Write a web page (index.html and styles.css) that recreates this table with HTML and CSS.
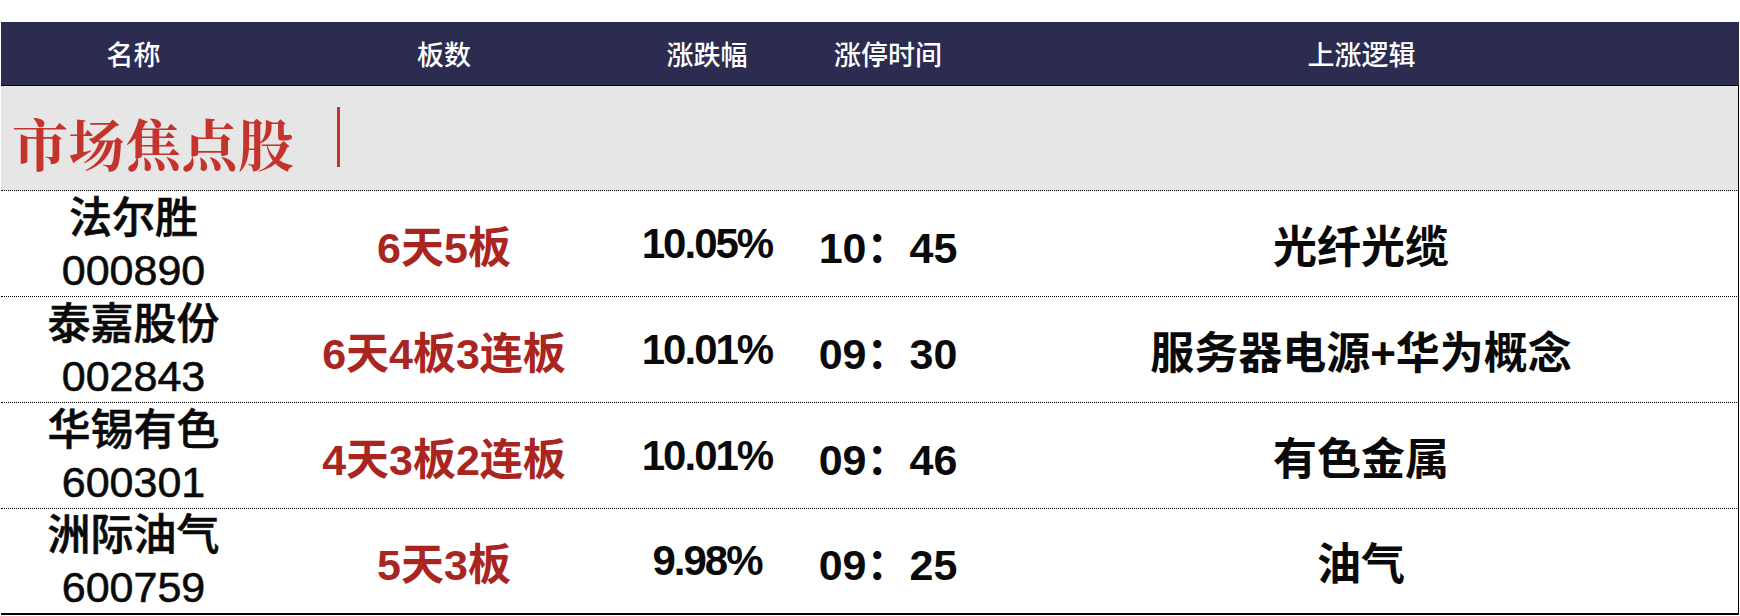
FILE: index.html
```html
<!DOCTYPE html>
<html lang="zh">
<head>
<meta charset="utf-8">
<title>市场焦点股</title>
<link rel="stylesheet" href="styles.css">
</head>
<body>
<div class="table">
  <div class="head">
    <div class="hc">名称</div>
    <div class="hc">板数</div>
    <div class="hc">涨跌幅</div>
    <div class="hc">涨停时间</div>
    <div class="hc">上涨逻辑</div>
  </div>
  <div class="section">
    <span class="section-title">市场焦点股</span>
    <span class="section-bar"></span>
  </div>
  <div class="row">
    <div class="c name"><span>法尔胜</span><span>000890</span></div>
    <div class="c board">6天5板</div>
    <div class="c pct">10.05%</div>
    <div class="c time">10：45</div>
    <div class="c logic">光纤光缆</div>
  </div>
  <div class="row">
    <div class="c name"><span>泰嘉股份</span><span>002843</span></div>
    <div class="c board">6天4板3连板</div>
    <div class="c pct">10.01%</div>
    <div class="c time">09：30</div>
    <div class="c logic">服务器电源+华为概念</div>
  </div>
  <div class="row">
    <div class="c name"><span>华锡有色</span><span>600301</span></div>
    <div class="c board">4天3板2连板</div>
    <div class="c pct">10.01%</div>
    <div class="c time">09：46</div>
    <div class="c logic">有色金属</div>
  </div>
  <div class="row last">
    <div class="c name"><span>洲际油气</span><span>600759</span></div>
    <div class="c board">5天3板</div>
    <div class="c pct">9.98%</div>
    <div class="c time">09：25</div>
    <div class="c logic">油气</div>
  </div>
</div>
</body>
</html>
```
FILE: styles.css
```css
html, body {
  margin: 0;
  padding: 0;
  background: #ffffff;
}
body {
  padding-top: 22px;
  font-family: "Liberation Sans", "Noto Sans CJK SC", sans-serif;
  color: #0a0a0a;
}
.table {
  margin-left: 1px;
  width: 1738px;
}
.head {
  display: grid;
  grid-template-columns: 265px 356px 170px 192px 1fr;
  height: 63px;
  background: #2b2c4f;
  border-bottom: 1px solid #000;
}
.hc {
  display: flex;
  align-items: center;
  justify-content: center;
  color: #ffffff;
  font-family: "Noto Sans CJK SC", sans-serif;
  font-size: 27px;
  font-weight: 500;
}
.section {
  background: #e6e6e7;
  border-right: 1px solid #000;
  border-bottom: 1px dotted #000;
  display: flex;
  align-items: center;
  padding-left: 11px;
  padding-top: 8px;
  box-sizing: border-box;
  height: 105px;
}
.section-title {
  font-family: "Noto Serif CJK SC", "Noto Sans CJK SC", serif;
  font-size: 56px;
  font-weight: 700;
  color: #c5342c;
  letter-spacing: 0.5px;
}
.section-bar {
  display: inline-block;
  width: 3px;
  height: 60px;
  background: #c5342c;
  margin-left: 42px;
  margin-top: -10px;
}
.row {
  display: grid;
  grid-template-columns: 265px 356px 170px 192px 1fr;
  height: 106px;
  border-right: 1px solid #000;
  border-bottom: 1px dotted #000;
  box-sizing: border-box;
}
.row.last {
  border-bottom: 2px solid #000;
}
.c {
  display: flex;
  align-items: center;
  justify-content: center;
  font-size: 42px;
  font-weight: 700;
  white-space: nowrap;
}
.name {
  flex-direction: column;
  line-height: 52px;
  font-weight: 500;
  font-size: 43px;
  -webkit-text-stroke: 0.6px #0a0a0a;
}
.board {
  color: #a8261f;
  font-size: 43px;
}
.pct {
  font-size: 42px;
  letter-spacing: -2px;
}
.time {
  font-size: 43px;
}
.logic {
  font-size: 44px;
}
```
